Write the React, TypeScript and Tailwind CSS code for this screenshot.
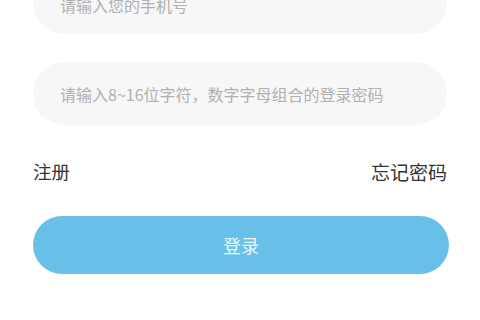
export default function App() {
  return (
    <div
      className="w-[480px] h-[320px] overflow-hidden bg-white"
      style={{ fontFamily: '"Noto Sans CJK SC", "Noto Sans", sans-serif' }}
    >
      <div className="flex flex-col px-[33px] -mt-[29px]">
        <div className="h-[63px] rounded-[32px] bg-[#f7f7f7] flex items-center pl-[27px] pt-[4px]">
          <span className="text-[16px] text-[#b0b0b0]">请输入您的手机号</span>
        </div>
        <div className="h-[63px] mt-[28px] rounded-[32px] bg-[#f7f7f7] flex items-center pl-[27px] pt-[1px]">
          <span className="text-[16px] text-[#b0b0b0]">请输入8~16位字符，数字字母组合的登录密码</span>
        </div>
        <div className="flex justify-between items-center mt-[35px] h-[24px]">
          <span className="text-[18.5px] text-[#333333]">注册</span>
          <span className="text-[19px] text-[#333333]">忘记密码</span>
        </div>
        <button className="mt-[32px] h-[58px] w-[416px] rounded-full bg-[#68c0e8] text-[18px] text-white/85 flex items-center justify-center">
          登录
        </button>
      </div>
    </div>
  )
}
